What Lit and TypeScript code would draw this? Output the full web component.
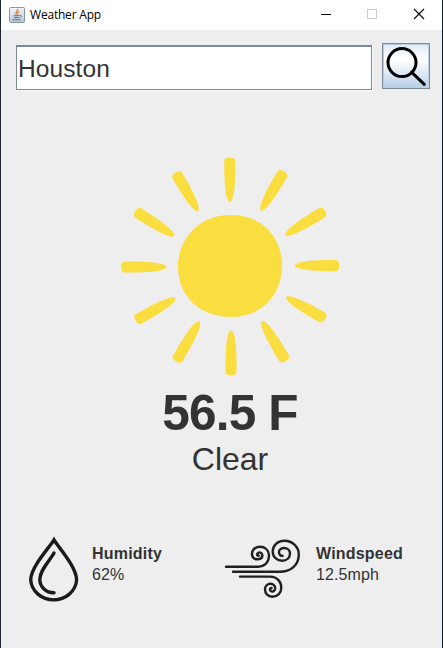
import { LitElement, html, css, svg } from "lit";
import { customElement, property } from "lit/decorators.js";

const RAYS: number[][] = [
  [229.9, 202, 229.8, 157.6], [261, 210.5, 284, 171.3], [285.5, 235, 325, 210.8],
  [295, 265.6, 339.4, 265.6], [286.3, 297, 325.3, 319], [262, 321, 285.8, 361.2],
  [231, 330.5, 231, 375.4], [199.3, 321.5, 176, 361.5], [175.5, 298, 135.5, 320.8],
  [166.5, 267, 121, 267], [174.3, 236, 135.3, 211], [198, 211.3, 175.5, 172.5],
];

@customElement("weather-sun")
class WeatherSun extends LitElement {
  static styles = css`:host, svg { display: block; width: 222px; height: 222px; }`;
  render() {
    return html`<svg viewBox="119 155 222 222" fill="#fadd3f">
      <path d="M230 215C261 214.5 282 236 282 266C281.5 296 261 317 231 317C200 317 178 296 178 267C178 238 200 215 230 215Z"/>
      ${RAYS.map(([x, y, ex, ey]) => {
        const l = Math.hypot(ex - x, ey - y);
        const a = (Math.atan2(ey - y, ex - x) * 180) / Math.PI;
        return svg`<path transform="translate(${x} ${y}) rotate(${a})"
          d="M0 0C0 -3.8 17 -6 ${l - 3} -5.5Q${l - 0.2} -5 ${l} 0Q${l - 0.2} 5 ${l - 3} 5.5C17 6 0 3.8 0 0Z"/>`;
      })}
    </svg>`;
  }
}

@customElement("weather-stat")
class WeatherStat extends LitElement {
  @property() label = "";
  @property() value = "";
  static styles = css`
    :host { display: flex; }
    .text { font-size: 16px; line-height: 21px; padding-top: 7px; letter-spacing: 0.1px; }
    .label { font-weight: bold; letter-spacing: 0.2px; }
    .text div { white-space: nowrap; }
  `;
  render() {
    return html`<slot></slot><div class="text"><div class="label">${this.label}</div><div>${this.value}</div></div>`;
  }
}

@customElement("app-root")
class AppRoot extends LitElement {
  static styles = css`
    :host {
      display: flex; flex-direction: column; box-sizing: border-box;
      width: 443px; height: 648px; overflow: hidden;
      background: #eee; color: #333;
      border-left: 1px solid #1c2635; border-right: 1px solid #101c2e;
      font-family: "Liberation Sans", Arial, sans-serif;
    }
    svg { display: block; }
    .titlebar { display: flex; align-items: center; height: 30px; flex: none; background: #fff; color: #000; padding-left: 8px; }
    .title { flex: 1; margin-left: 5px; font: 12px/30px "Open Sans", sans-serif; letter-spacing: -0.2px; }
    .search { display: flex; padding: 13px 12px 0 15px; }
    .field {
      box-sizing: border-box; width: 356px; height: 45px; margin-top: 2px;
      border: 1px solid #7a8a99; border-top-width: 2px; background: #fff;
      box-shadow: 1px 1px 0 #fff; font-size: 24.5px; line-height: 43px; padding-left: 1px;
      letter-spacing: 0.1px;
    }
    .button {
      box-sizing: border-box; width: 48px; height: 46px; margin-left: 10px;
      border: 1px solid #7a8a99;
      background: linear-gradient(#dde8f3 0%, #fff 32%, #fff 36%, #b8cfe5 100%);
      box-shadow: inset 0 0 0 1px #b8cfe5;
    }
    .weather { display: flex; flex-direction: column; align-items: center; padding-top: 65px; margin-left: 17px; }
    .temp { font-size: 49.5px; font-weight: bold; line-height: 56px; margin-top: 8px; letter-spacing: -0.8px; }
    .sky { font-size: 32px; line-height: 36px; }
    .stats { display: flex; margin-top: 59px; padding-left: 23px; }
    .humidity { width: 195px; }
    .humidity svg { margin-right: 8px; }
    .wind svg { margin-right: 13px; }
  `;
  render() {
    return html`
      <div class="titlebar">
        <svg width="16" height="16" viewBox="0 0 16 16" fill="none">
          <defs><linearGradient id="j" x2="0" y2="1"><stop stop-color="#f4f6f8"/><stop offset="1" stop-color="#b9c6d2"/></linearGradient></defs>
          <rect x=".5" y=".5" width="15" height="15" rx="1" fill="url(#j)" stroke="#8796a5"/>
          <path d="M8.8 2C9.5 4 5.5 4.5 7.5 7.5M10.5 4.5C8 5.5 8.5 6 9 7.5" stroke="#e8762c" stroke-width="1.2"/>
          <path d="M4.5 8.7H10.5M5 10.5H10M3.5 12.7H11.5M11 8.5C13.2 8.2 12.6 10.2 11 10.6" stroke="#4f7397"/>
        </svg>
        <div class="title">Weather App</div>
        <svg width="122" height="30" viewBox="320 0 122 30" fill="none">
          <path d="M321 14.5H331" stroke="#000"/>
          <rect x="367.5" y="9.5" width="9" height="9" stroke="#ccc"/>
          <path d="M414 9L424 19M424 9L414 19" stroke="#000" stroke-width="1.1"/>
        </svg>
      </div>
      <div class="search">
        <div class="field">Houston</div>
        <div class="button">
          <svg width="46" height="44" viewBox="383 44 46 44" fill="none" stroke="#000">
            <circle cx="402" cy="62.6" r="14" stroke-width="3"/>
            <path d="M411.5 72.2L424.3 84.3" stroke-width="3" stroke-linecap="round"/>
          </svg>
        </div>
      </div>
      <div class="weather">
        <weather-sun></weather-sun>
        <div class="temp">56.5 F</div>
        <div class="sky">Clear</div>
      </div>
      <div class="stats">
        <weather-stat class="humidity" label="Humidity" value="62%">
          <svg width="60" height="70" viewBox="24 535 60 70" fill="none" stroke="#1a1a1a" stroke-width="3.4">
            <path d="M54 538.8C49 547 30.7 566 30.7 579A23 21.3 0 0 0 76.6 579C76.6 566 59 547 54 538.8Z"/>
            <path d="M54 552C49.5 560 39.8 569 39.8 578.5C40 586 46 592 54 591.8" stroke-linecap="round"/>
          </svg>
        </weather-stat>
        <weather-stat class="wind" label="Windspeed" value="12.5mph">
          <svg width="84" height="70" viewBox="219 536 84 70" fill="none" stroke="#231f20" stroke-width="2.4" stroke-linecap="round">
            <path d="M226 566.7H258C266 566.5 269.3 561 269 555C268.5 549.5 264.5 546.8 260 546.8C254.5 546.8 251.7 550.5 252 554.5C252.3 558 255 559.5 258 559.3C261 559 262.5 557 262.3 554.8C262 552.5 259 551.5 257.5 553.5C256.7 555 257.5 556 258.8 555.7"/>
            <path d="M233 571.8H279C291 572 298.8 565 298.8 554.5C298.8 546.5 292 540.7 284.5 540.7C277 540.7 272.7 546 272.7 551.5C272.7 557 277 560.7 282 560.7C287 560.7 290 557.5 290 553.5C290 550 287 548 284 548C280.7 548 278.7 550 279 552.7C279.3 555 281 556 282.5 555.8"/>
            <path d="M240 576.6H270C277.5 576.8 281.3 582 281.3 587.5C281.3 593 277.5 596.7 272.5 596.7C268 596.7 265 593.5 265 589.5C265 586 267.5 583.8 270.5 583.8C273.5 583.8 275.3 586 275.2 588.5C275 591 272.5 592.3 270.8 591C269.2 589.7 270 588 271.5 588"/>
          </svg>
        </weather-stat>
      </div>
    `;
  }
}
